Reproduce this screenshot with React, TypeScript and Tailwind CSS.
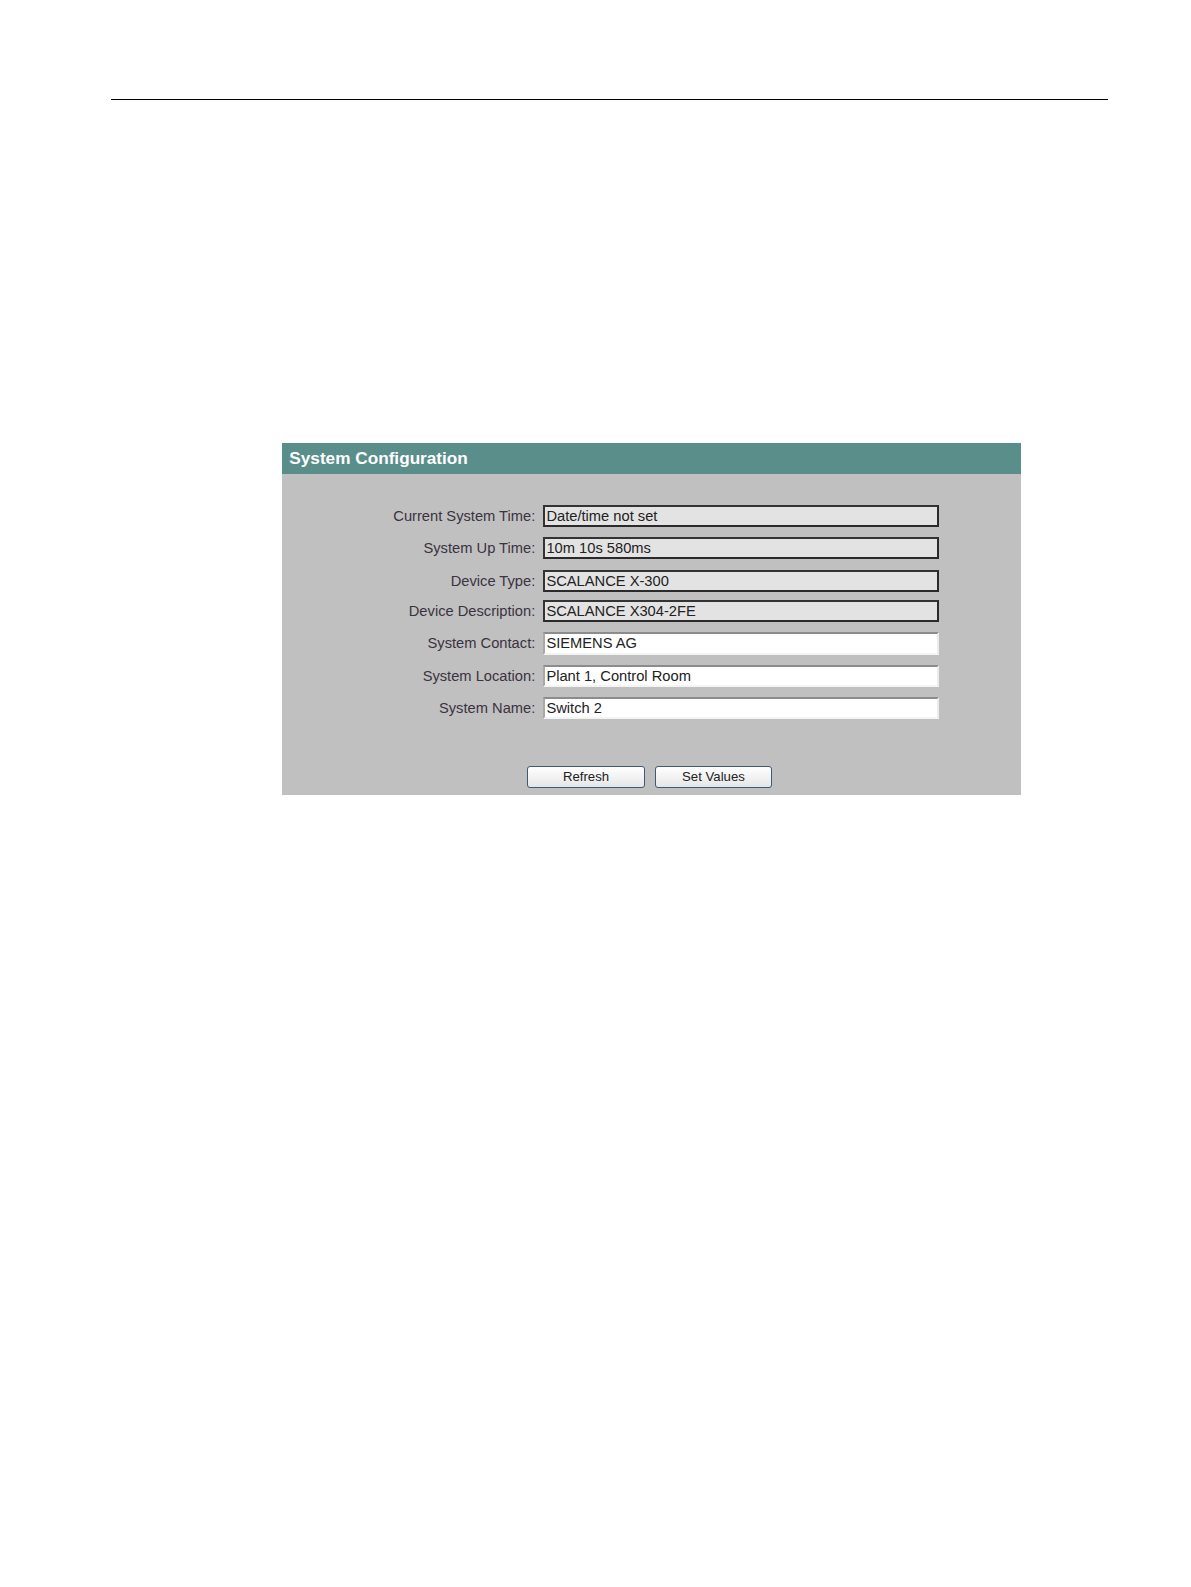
import React from "react";

const rows: { label: string; value: string; ro: boolean; mt: string }[] = [
  { label: "Current System Time:", value: "Date/time not set", ro: true, mt: "mt-0" },
  { label: "System Up Time:", value: "10m 10s 580ms", ro: true, mt: "mt-[10.1px]" },
  { label: "Device Type:", value: "SCALANCE X-300", ro: true, mt: "mt-[10.1px]" },
  { label: "Device Description:", value: "SCALANCE X304-2FE", ro: true, mt: "mt-[8px]" },
  { label: "System Contact:", value: "SIEMENS AG", ro: false, mt: "mt-[10.1px]" },
  { label: "System Location:", value: "Plant 1, Control Room", ro: false, mt: "mt-[10.1px]" },
  { label: "System Name:", value: "Switch 2", ro: false, mt: "mt-[10.1px]" },
];

export default function App() {
  return (
    <div className="min-h-screen w-full overflow-hidden bg-white font-['Liberation_Sans',Arial,sans-serif]">
      <div className="pt-[99px] pl-[111.3px]">
        <div className="h-px w-[996.8px] bg-black" />
      </div>
      <div className="ml-[282.3px] mt-[343px] w-[738.8px] bg-[#c0c0c0]">
        <div className="flex h-[31.4px] items-center bg-[#5a8e8b] pl-[7px] text-[17.2px] font-bold text-white">
          System Configuration
        </div>
        <div className="flex flex-col pt-[30.4px] pb-[7.1px]">
          {rows.map((r) => (
            <div key={r.label} className={`flex items-center ${r.mt}`}>
              <div className="w-[253px] text-right text-[14.7px] text-[#3b3340]">{r.label}</div>
              <div
                className={
                  r.ro
                    ? "ml-[8.1px] flex h-[22.3px] w-[395.7px] items-center border-2 border-t-[#333] border-l-[#333] border-r-[#2a2a2a] border-b-[#2a2a2a] bg-[#e3e3e3] pl-[1px] text-[14.7px] text-[#222]"
                    : "ml-[8.1px] flex h-[22.3px] w-[395.7px] items-center border-2 border-t-[#8c8c8c] border-l-[#a8a8a8] border-r-[#ececec] border-b-[#f4f4f4] bg-white pl-[1px] text-[14.7px] text-[#222]"
                }
              >
                {r.value}
              </div>
            </div>
          ))}
          <div className="mt-[46.5px] flex gap-[10.1px] pl-[245px]">
            <button className="flex h-[22.3px] w-[117.4px] items-center justify-center rounded-[3px] border border-[#3e5a78] bg-gradient-to-b from-white to-[#e6e6e6] text-[13.2px] text-[#222]">
              Refresh
            </button>
            <button className="flex h-[22.3px] w-[117.4px] items-center justify-center rounded-[3px] border border-[#3e5a78] bg-gradient-to-b from-white to-[#e6e6e6] text-[13.2px] text-[#222]">
              Set Values
            </button>
          </div>
        </div>
      </div>
    </div>
  );
}
